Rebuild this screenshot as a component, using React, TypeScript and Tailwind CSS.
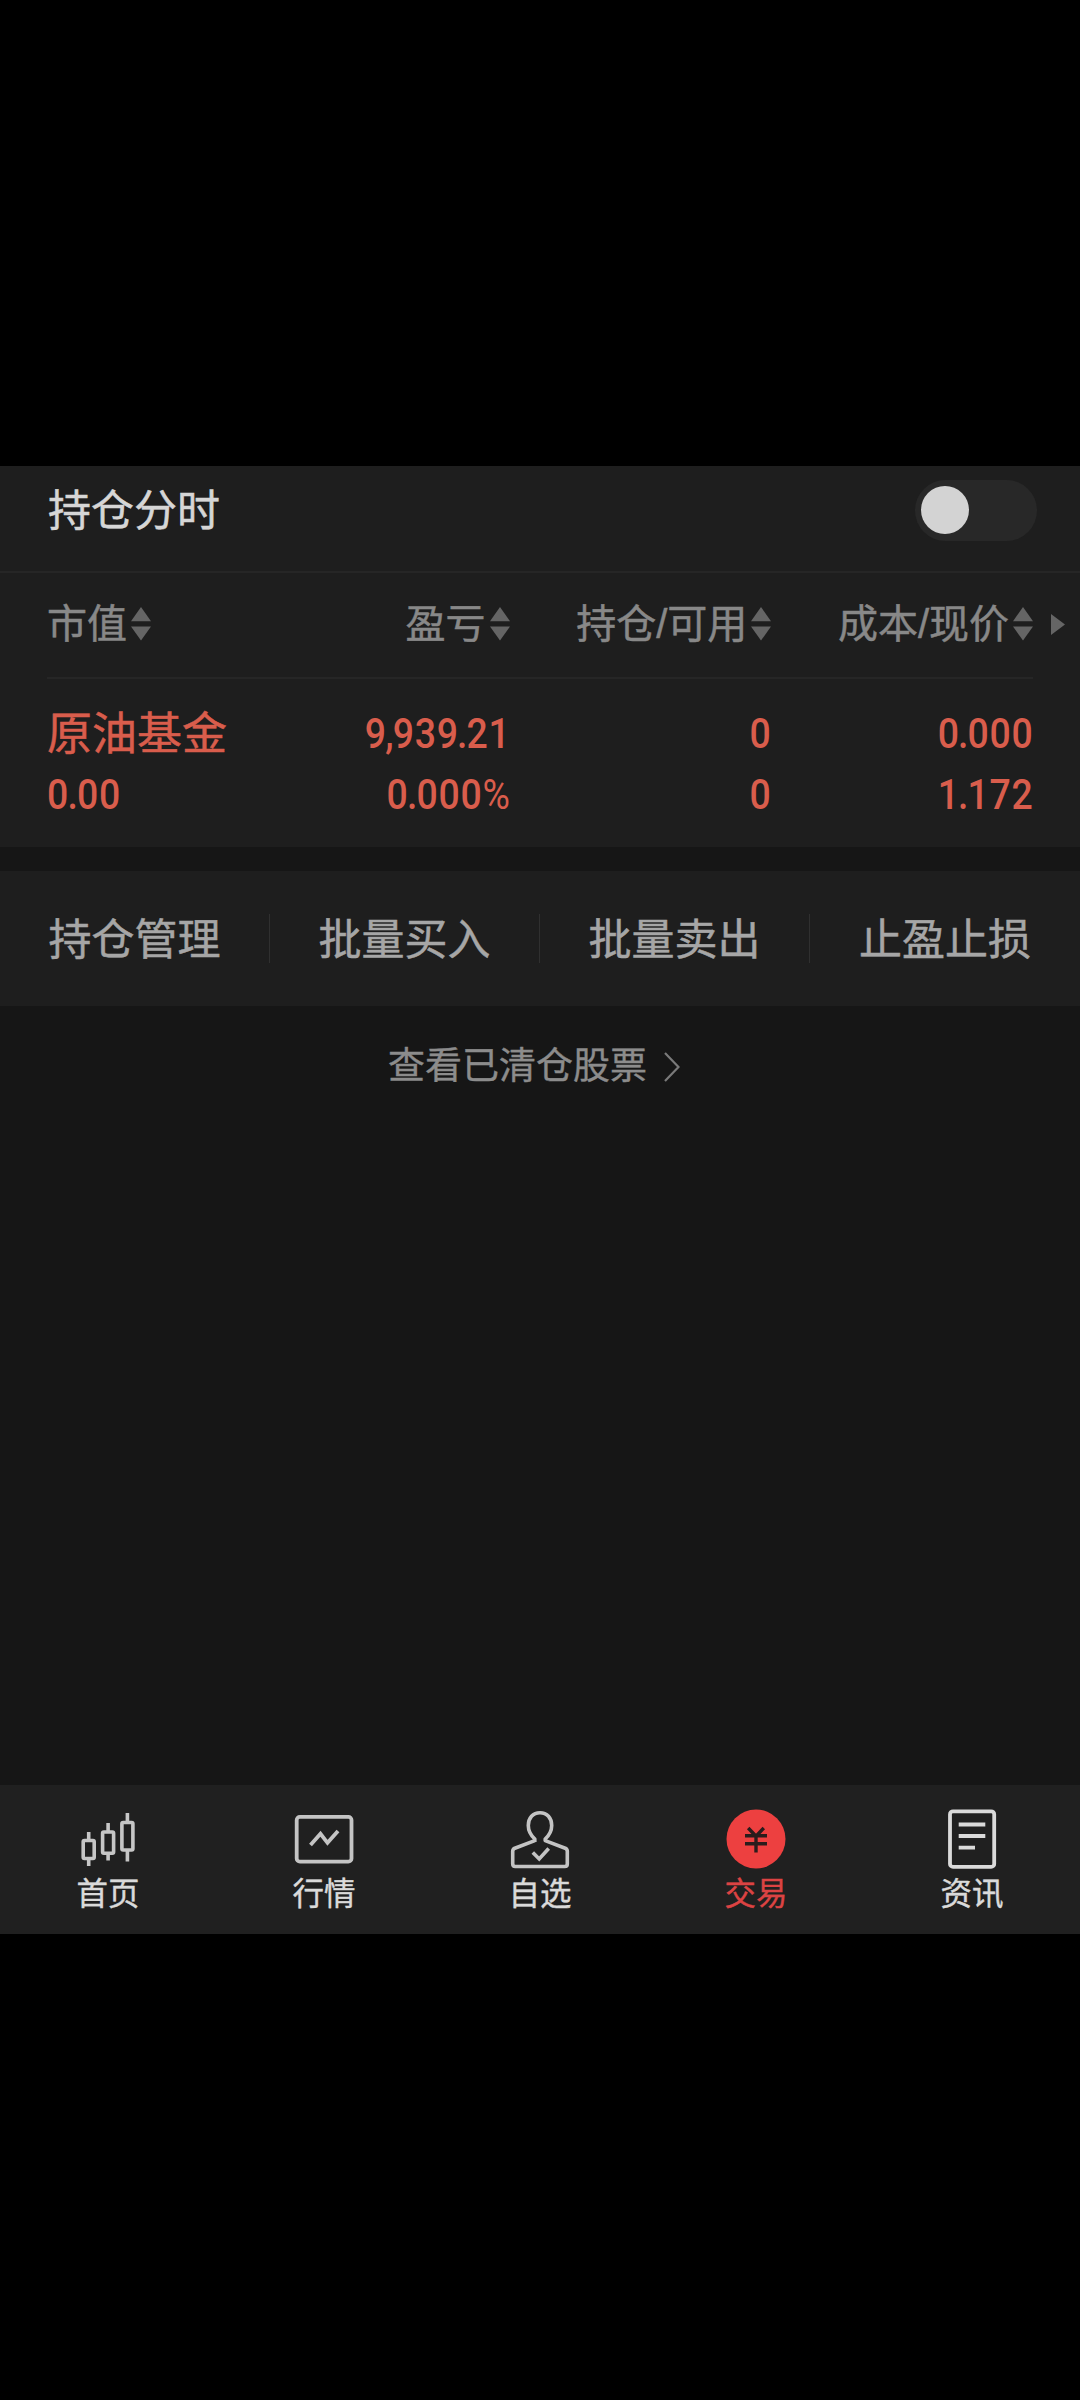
import React from "react";

function SortIcon() {
  return (
    <svg className="ml-[4px] block h-[34px] w-5 shrink-0" viewBox="0 0 20 34" fill="#656565">
      <path d="M10 0 L20 14.2 H0 Z" />
      <path d="M0 19.4 H20 L10 33.6 Z" />
    </svg>
  );
}

function HeaderCell({ label, className }: { label: string; className: string }) {
  const [first, second] = label.split("/");
  return (
    <div className={`flex items-center ${className}`}>
      <span className="flex whitespace-nowrap [-webkit-text-stroke:0.5px_currentColor]">
        {first}
        {second && <span className="w-[11px] text-center">/</span>}
        {second}
      </span>
      <SortIcon />
    </div>
  );
}

function Num({ value, left }: { value: string; left?: boolean }) {
  return (
    <div
      className={`h-[61px] font-['Roboto'] text-[43px] font-medium leading-[59px] tracking-[0.8px] whitespace-nowrap ${
        left ? "origin-left scale-x-[0.87]" : "origin-right scale-x-[0.87]"
      }`}
    >
      {value.split(/([.,%])/).map((part, i) => {
        if (part === "." || part === ",") {
          return (
            <span key={i} className="-mx-[1.8px]">
              {part}
            </span>
          );
        }
        if (part === "%") {
          return (
            <span key={i} className="font-normal">
              {part}
            </span>
          );
        }
        return part;
      })}
    </div>
  );
}

const actions = ["持仓管理", "批量买入", "批量卖出", "止盈止损"];

function CandlesIcon() {
  return (
    <svg className="size-16" viewBox="0 0 64 64" fill="none" stroke="#c6c6c6" strokeWidth="3.6">
      <rect x="7.2" y="34.5" width="11" height="18" rx="1.2" />
      <path d="M12.7 26 V34.5 M12.7 52.5 V60" />
      <rect x="26.6" y="26" width="11" height="21.3" rx="1.2" />
      <path d="M32.1 17 V26 M32.1 47.3 V54.6" />
      <rect x="45.9" y="16.5" width="11" height="27.5" rx="1.2" />
      <path d="M51.4 7 V16.5 M51.4 44 V55.6" />
    </svg>
  );
}

function MarketIcon() {
  return (
    <svg className="size-16" viewBox="0 0 64 64" fill="none" stroke="#c4c4c4" strokeWidth="3.8">
      <rect x="4.7" y="10.8" width="54.8" height="44.8" rx="3.2" />
      <path d="M18.5 39 L28.5 27.8 L35.5 36.8 L46 25" />
    </svg>
  );
}

function PersonIcon() {
  return (
    <svg className="size-16" viewBox="0 0 64 64" fill="none" stroke="#c4c4c4" strokeWidth="3.6" strokeLinejoin="round">
      <path d="M26.8 36 V33 C22.5 29 20.3 25 20.3 19.5 C20.3 12 25 6.7 32 6.7 C39 6.7 43.7 12 43.7 19.5 C43.7 25 41.5 29 37.2 33 V34.6 L57.2 42.2 C58.8 43 59.3 43.8 59.3 45.3 V58 C59.3 59.7 58.5 60.5 56.8 60.5 H7.2 C5.5 60.5 4.7 59.7 4.7 58 V45.3 C4.7 43.8 5.2 43 6.8 42.2 L26.8 34.6" />
      <path d="M24.8 46.5 L31.2 53 L40.7 42.5" strokeLinejoin="miter" />
    </svg>
  );
}

function TradeIcon() {
  return (
    <svg className="size-16" viewBox="0 0 64 64" fill="none">
      <circle cx="32" cy="33" r="29.5" fill="#ed4040" />
      <path
        d="M24.2 22 L32 30.2 L39.8 22 M21 29.8 H43 M21 37.8 H43 M32 29 V46.5"
        stroke="#2a1c1c"
        strokeWidth="3.4"
      />
    </svg>
  );
}

function NewsIcon() {
  return (
    <svg className="size-16" viewBox="0 0 64 64" fill="none" stroke="#dadada" strokeWidth="3.8">
      <rect x="10" y="5.3" width="44.2" height="55.6" rx="3" />
      <path d="M18.7 18.5 H45.3 M18.7 30 H45.3 M18.7 41.7 H35" />
    </svg>
  );
}

const tabs = [
  { label: "首页", icon: <CandlesIcon /> },
  { label: "行情", icon: <MarketIcon /> },
  { label: "自选", icon: <PersonIcon /> },
  { label: "交易", icon: <TradeIcon />, active: true },
  { label: "资讯", icon: <NewsIcon /> },
];

export default function App() {
  return (
    <div className="flex h-[2400px] w-[1080px] flex-col bg-black pt-[466px] font-['Liberation_Sans','Noto_Sans_CJK_SC',sans-serif]">
      <main className="flex h-[1319px] flex-col bg-[#161616]">
        <section className="h-[381px] bg-[#1e1e1e]">
          <div className="flex h-[107px] items-start justify-between border-b-2 border-[#262626] pr-[43px] pl-12">
            <h1 className="pt-[15px] text-[43px] leading-[60px] text-[#d6d6d6] [-webkit-text-stroke:0.5px_currentColor]">
              持仓分时
            </h1>
            <div className="mt-[14px] flex h-[61px] w-[122px] items-center rounded-full bg-[#282828] pb-px pl-[6px]">
              <div className="size-[48px] rounded-full bg-[#d3d3d3]" />
            </div>
          </div>
          <div className="mx-[47px] flex h-[106px] items-center border-b-2 border-[#262626] text-[40px] leading-[60px] text-[#888888]">
            <HeaderCell label="市值" className="w-[210px] pb-[2px]" />
            <HeaderCell label="盈亏" className="w-[253px] justify-end pb-[2px]" />
            <HeaderCell label="持仓/可用" className="w-[262px] justify-end pb-[2px]" />
            <HeaderCell label="成本/现价" className="w-[262px] justify-end pb-[2px]" />
            <svg className="-mr-8 mb-[2px] ml-[18px] h-[21px] w-[14px] shrink-0" viewBox="0 0 14 21" fill="#656565">
              <path d="M0 0 L14 10.5 L0 21 Z" />
            </svg>
          </div>
          <div className="mx-[47px] flex pt-[25px] text-[#d95d4c]">
            <div className="w-[210px]">
              <div className="h-[61px] text-[45px] leading-[61px] [-webkit-text-stroke:0.5px_currentColor]">原油基金</div>
              <Num value="0.00" left />
            </div>
            <div className="w-[254px] text-right">
              <Num value="9,939.21" />
              <Num value="0.000%" />
            </div>
            <div className="w-[262px] text-right">
              <Num value="0" />
              <Num value="0" />
            </div>
            <div className="w-[262px] text-right">
              <Num value="0.000" />
              <Num value="1.172" />
            </div>
          </div>
        </section>

        <section className="mt-6 grid h-[135px] grid-cols-4 bg-[#1e1e1e]">
          {actions.map((a, i) => (
            <div key={a} className="flex items-start pt-[43px]">
              <span className="-mt-[4px] flex-1 text-center text-[43px] leading-[60px] text-[#a6a6a6] [-webkit-text-stroke:0.5px_currentColor]">
                {a}
              </span>
              {i < 3 && <span className="h-[49px] w-px bg-[#303030]" />}
            </div>
          ))}
        </section>

        <div className="mt-[28px] flex h-[60px] items-center pl-[388px] text-[#8c8c8c]">
          <span className="pt-[5px] text-[37px] leading-[60px] [-webkit-text-stroke:0.4px_currentColor]">
            查看已清仓股票
          </span>
          <svg className="mt-[5px] ml-[17px] h-[30px] w-4" viewBox="0 0 16 30" fill="none" stroke="#7a7a7a" strokeWidth="2.2">
            <path d="M1 1 L14.5 15 L1 29" />
          </svg>
        </div>
      </main>

      <nav className="grid h-[149px] grid-cols-5 bg-[#202020]">
        {tabs.map((t) => (
          <div key={t.label} className="flex flex-col items-center pt-[21px]">
            {t.icon}
            <span
              className={`mt-[2px] text-[31.5px] leading-[44px] [-webkit-text-stroke:0.4px_currentColor] ${
                t.active ? "text-[#dc4343]" : "text-[#dadada]"
              }`}
            >
              {t.label}
            </span>
          </div>
        ))}
      </nav>
    </div>
  );
}
